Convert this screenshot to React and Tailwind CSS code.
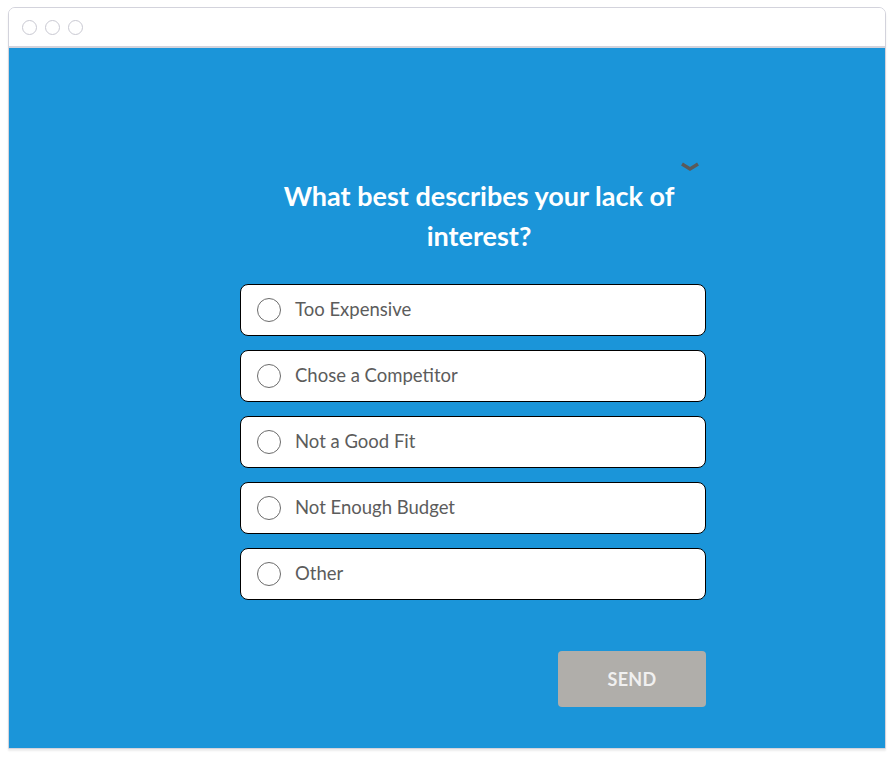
import React from 'react';

const options = ['Too Expensive', 'Chose a Competitor', 'Not a Good Fit', 'Not Enough Budget', 'Other'];

export default function App() {
  return (
    <div className="w-[890px] h-[760px] bg-white pt-[7px] pl-[8px]" style={{ fontFamily: 'Lato, "Open Sans", sans-serif' }}>
      <div className="w-[878px] border border-[#d3d3dc] rounded-t-[7px] overflow-hidden shadow-[0_2px_2px_rgba(0,0,0,0.08)]">
        <div className="h-[40px] bg-white flex items-center gap-[8px] pl-[13px] border-b-2 border-[#d3d3dc]">
          <span className="w-[15px] h-[15px] rounded-full border border-[#c9c9d2]" />
          <span className="w-[15px] h-[15px] rounded-full border border-[#c9c9d2]" />
          <span className="w-[15px] h-[15px] rounded-full border border-[#c9c9d2]" />
        </div>
        <div className="h-[700px] bg-[#1b95d9] flex flex-col items-center pt-[128px]">
          <div className="relative w-[466px] ml-[64px]">
            <svg className="absolute right-[12px] top-[-14px]" width="20" height="10" viewBox="0 0 20 10">
              <path d="M2 2 L10 7 L18 2" stroke="#5a5a5a" strokeWidth="3.5" fill="none" />
            </svg>
            <h1 className="text-white font-bold text-[27px] leading-[40px] text-center px-[24px]">
              What best describes your lack of interest?
            </h1>
          </div>
          <div className="w-[466px] flex flex-col gap-[14px] mt-[28px] ml-[52px]">
            {options.map((o) => (
              <div key={o} className="h-[52px] bg-white border-[1.5px] border-black rounded-[8px] flex items-center pl-[16px] gap-[14px]">
                <span className="w-[24px] h-[24px] rounded-full border-[1.5px] border-[#6b6b6b]" />
                <span className="text-[18.5px] text-[#5c5c5c]">{o}</span>
              </div>
            ))}
          </div>
          <div className="w-[466px] flex justify-end mt-[51px] ml-[52px]">
            <button className="w-[148px] h-[56px] bg-[#b0aeaa] rounded-[4px] text-[#f0f0f0] font-bold text-[18px] tracking-[0.3px]">
              SEND
            </button>
          </div>
        </div>
      </div>
    </div>
  );
}
